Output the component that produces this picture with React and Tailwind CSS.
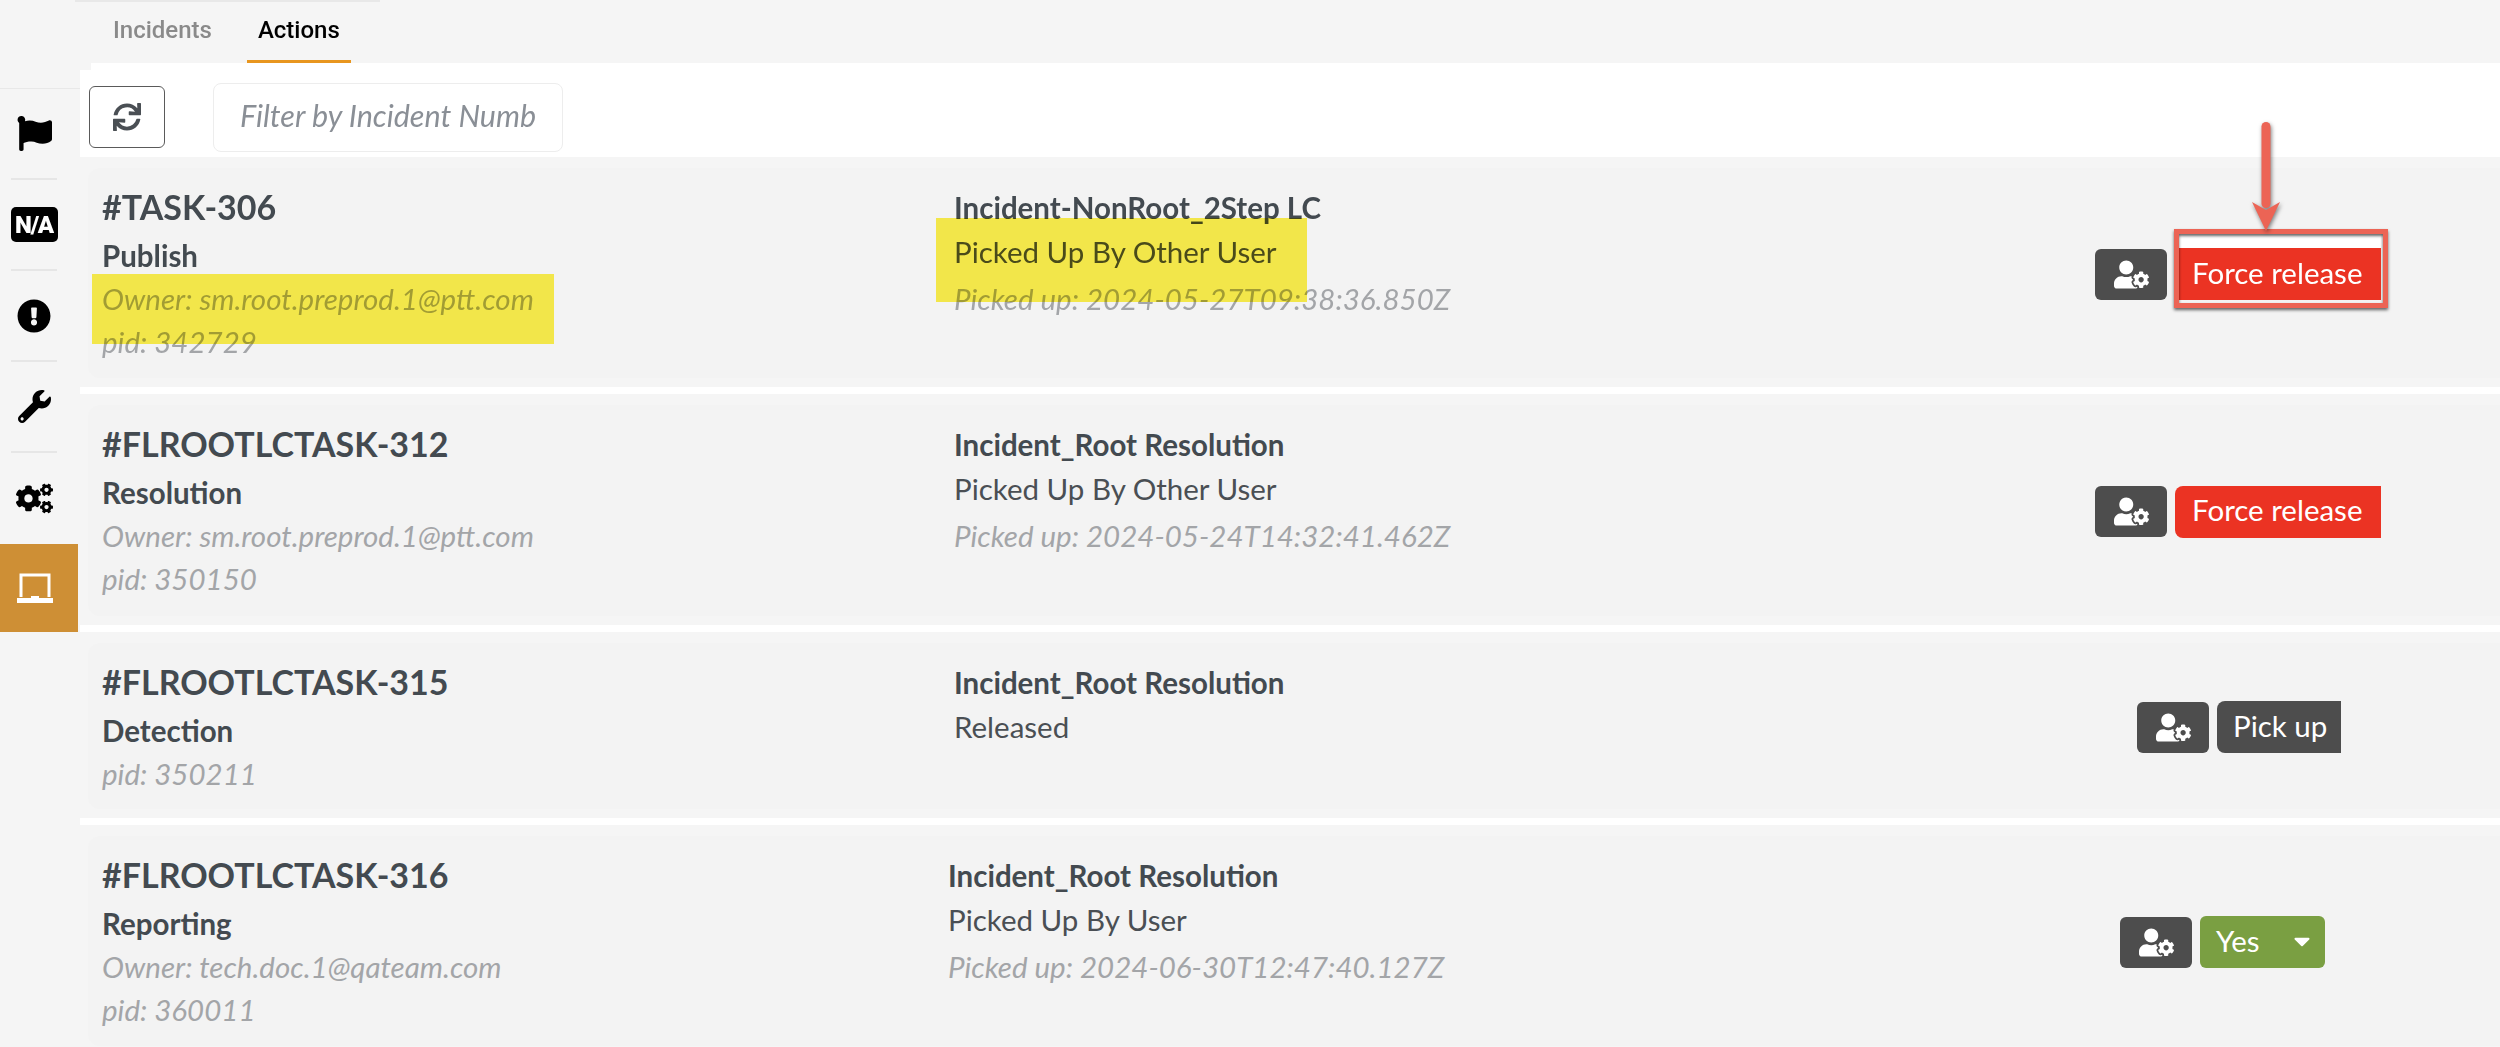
import React from "react";
import { FaFlag, FaExclamationCircle, FaWrench, FaCogs, FaSync, FaUserCog, FaCaretDown } from "react-icons/fa";

const LaptopIcon = () => (
  <svg width="36" height="30" viewBox="0 0 36 30" fill="none">
    <path d="M4 24V2h28v22" stroke="#fff" strokeWidth="3" />
    <path d="M0 25h14v-2h8v2h14v5H0z" fill="#fff" />
  </svg>
);

const navItems = [
  <FaFlag size={35} />,
  <span className="flex h-[35px] w-[47px] items-center justify-center rounded-[5px] bg-black font-['Roboto',sans-serif] text-[24px] font-black tracking-tighter text-white">
    N/A
  </span>,
  <FaExclamationCircle size={34} />,
  <FaWrench size={33} />,
  <FaCogs size={37} />,
];

const Sidebar = () => (
  <div className="flex w-[80px] shrink-0 flex-col pt-[88px]">
    <div className="border-t border-[#e8e8e8]">
      {navItems.map((icon, idx) => (
        <div key={idx} className="flex h-[91px] flex-col items-center pr-[12px] text-black">
          <div className="flex flex-1 items-center">{icon}</div>
          {idx < navItems.length - 1 && <div className="h-[2px] w-[46px] bg-[#e6e6e6]" />}
        </div>
      ))}
    </div>
    <div className="flex h-[88px] w-[78px] items-center justify-center bg-[#ce8f35] pr-[8px]">
      <LaptopIcon />
    </div>
  </div>
);

const UserButton = () => (
  <button className="flex h-[51px] w-[72px] items-center justify-center rounded-md bg-[#4d4d4d] text-white">
    <FaUserCog size={35} />
  </button>
);

const ForceRelease = ({ marked }) => (
  <div className={marked ? "relative ml-[4px]" : "relative"}>
    {marked && <div className="absolute -top-[14px] left-0 h-[14px] w-[202px] bg-white" />}
    <button
      className={`relative flex h-[52px] items-center bg-[#eb3323] pb-[2px] text-[29.5px] text-white ${
        marked ? "w-[202px] pl-[13px]" : "w-[206px] rounded-l-lg pl-[17px]"
      }`}
    >
      Force release
    </button>
    {marked && (
      <>
        <div className="absolute -top-[19px] -left-[5px] h-[79px] w-[214px] border-[5px] border-[#ec6455] shadow-[0_2px_3px_rgba(0,0,0,0.6),inset_0_2px_3px_rgba(0,0,0,0.6)]" />
        <svg
          className="absolute -top-[128px] left-[72px] drop-shadow-[1px_2px_2px_rgba(0,0,0,0.5)]"
          width="30"
          height="114"
          viewBox="0 0 30 114"
        >
          <path d="M15 6.5v77" stroke="#ec6455" strokeWidth="9" strokeLinecap="round" />
          <path d="M1 82l14 8 14-8-14 29z" fill="#ec6455" />
        </svg>
      </>
    )}
  </div>
);

const PickUp = () => (
  <button className="flex h-[52px] w-[124px] items-center rounded-l-lg bg-[#4d4d4d] pb-[2px] pl-[16px] text-[29.5px] text-white">
    Pick up
  </button>
);

const YesButton = () => (
  <button className="flex h-[52px] w-[125px] items-center justify-between rounded-md bg-[#7a9f42] pb-[2px] pl-[16px] pr-[10px] text-[29.5px] text-white">
    Yes
    <FaCaretDown size={26} />
  </button>
);

const TaskRow = ({ id, phase, owner, pid, incident, status, pickedUp, leftWidth, actionRight, action, children, className }) => (
  <div className={`relative shrink-0 bg-[#f5f5f5] pl-[8px] pt-[11px] pb-[9px] ${className}`}>
    <div className="flex h-full rounded-l-xl bg-[#f3f3f3]">
      <div className="shrink-0 pl-[14px] pt-[11px]" style={{ width: leftWidth }}>
        <div className="text-[34px] leading-[56px] font-bold text-[#434a50]">{id}</div>
        <div className="text-[29.5px] leading-[42px] font-bold text-[#434a50]">{phase}</div>
        {owner && <div className="text-[29.5px] leading-[43px] text-[#a3a5a8] italic">Owner: {owner}</div>}
        <div className="text-[29.5px] leading-[43px] text-[#a3a5a8] italic">pid: {pid}</div>
      </div>
      <div className="pt-[18px]">
        <div className="text-[29.5px] leading-[44px] font-bold text-[#434a50]">{incident}</div>
        <div className="text-[29.5px] leading-[44px] text-[#4a4f54]">{status}</div>
        {pickedUp && <div className="text-[29.5px] leading-[50px] text-[#a3a5a8] italic">Picked up: {pickedUp}</div>}
      </div>
      <div className="flex flex-1 items-center justify-end gap-[8px] pt-[2px]" style={{ paddingRight: actionRight }}>
        <UserButton />
        {action}
      </div>
    </div>
    {children}
  </div>
);

export default function App() {
  return (
    <div className="flex h-[1047px] w-full overflow-hidden bg-[#f5f5f5] font-['Lato',sans-serif]">
      <Sidebar />
      <div className="flex flex-1 flex-col">
        <div className="relative flex h-[63px] shrink-0 gap-[46px] pl-[33px] pt-[13px] font-['Roboto',sans-serif] text-[24px] leading-[34px] font-medium">
          <div className="absolute top-0 -left-[5px] h-[2px] w-[305px] bg-[#e8e8e8]" />
          <span className="text-[#8a8a8a]">Incidents</span>
          <span className="relative text-black">
            Actions
            <span className="absolute top-[47px] -left-[11px] h-[3px] w-[104px] bg-[#e8961f]" />
          </span>
        </div>
        <div className="ml-[11px] h-[7px] shrink-0 bg-white" />
        <div className="flex h-[87px] shrink-0 items-center gap-[48px] bg-white pl-[9px] pt-[7px]">
          <button className="flex h-[62px] w-[76px] items-center justify-center rounded-md border border-[#5a5a5a] text-[#4a4f54]">
            <FaSync size={28} />
          </button>
          <input
            placeholder="Filter by Incident Numb"
            className="h-[69px] w-[350px] rounded-lg border border-[#ededed] bg-white pb-[4px] pl-[26px] text-[30.5px] italic outline-none placeholder:text-[#8a8f96]"
          />
        </div>

        <div className="flex flex-1 flex-col bg-white">
          <TaskRow
            className="h-[230px]"
            id="#TASK-306"
            phase="Publish"
            owner="sm.root.preprod.1@ptt.com"
            pid="342729"
            incident="Incident-NonRoot_2Step LC"
            status="Picked Up By Other User"
            pickedUp="2024-05-27T09:38:36.850Z"
            leftWidth={866}
            actionRight={119}
            action={<ForceRelease marked />}
          >
            {/* highlighter marks from the annotated screenshot */}
            <div className="absolute top-[117px] left-[12px] h-[70px] w-[462px] bg-[#fef24d] mix-blend-multiply" />
            <div className="absolute top-[61px] left-[856px] h-[84px] w-[371px] bg-[#fef24d] mix-blend-multiply" />
          </TaskRow>
          <TaskRow
            className="mt-[7px] h-[231px]"
            id="#FLROOTLCTASK-312"
            phase="Resolution"
            owner="sm.root.preprod.1@ptt.com"
            pid="350150"
            incident="Incident_Root Resolution"
            status="Picked Up By Other User"
            pickedUp="2024-05-24T14:32:41.462Z"
            leftWidth={866}
            actionRight={119}
            action={<ForceRelease />}
          />
          <TaskRow
            className="mt-[7px] h-[186px]"
            id="#FLROOTLCTASK-315"
            phase="Detection"
            pid="350211"
            incident="Incident_Root Resolution"
            status="Released"
            leftWidth={866}
            actionRight={159}
            action={<PickUp />}
          />
          <TaskRow
            className="mt-[7px] h-[230px]"
            id="#FLROOTLCTASK-316"
            phase="Reporting"
            owner="tech.doc.1@qateam.com"
            pid="360011"
            incident="Incident_Root Resolution"
            status="Picked Up By User"
            pickedUp="2024-06-30T12:47:40.127Z"
            leftWidth={860}
            actionRight={175}
            action={<YesButton />}
          />
        </div>
      </div>
    </div>
  );
}
